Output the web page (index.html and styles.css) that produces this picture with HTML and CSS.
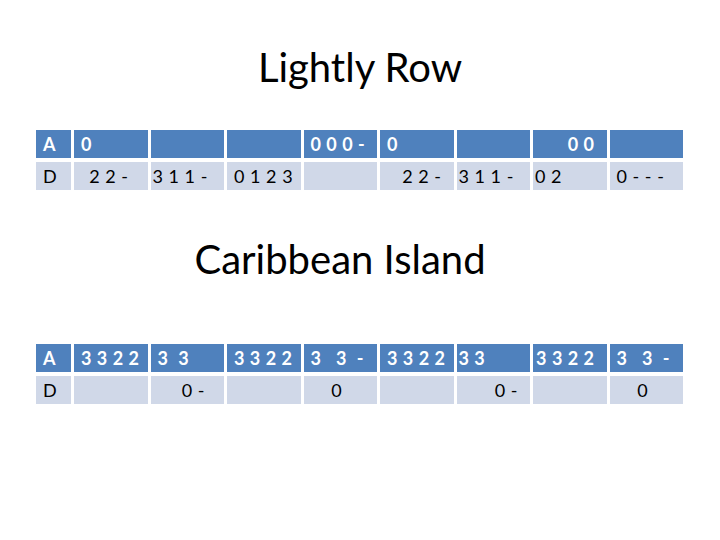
FILE: index.html
```html
<!DOCTYPE html>
<html>
<head>
  <title>Lightly Row</title>
  <link rel="stylesheet" href="styles.css">
</head>
<body>

<div class="slide">
  <h1 class="title">Lightly Row</h1>

  <div class="tab first">
    <div class="cell head">A</div>
    <div class="cell head">0</div>
    <div class="cell head"></div>
    <div class="cell head"></div>
    <div class="cell head">0 0 0 -</div>
    <div class="cell head">0</div>
    <div class="cell head"></div>
    <div class="cell head right">0 0</div>
    <div class="cell head"></div>

    <div class="cell body">D</div>
    <div class="cell body right wide">2 2 -</div>
    <div class="cell body tight">3 1 1 -</div>
    <div class="cell body">0 1 2 3</div>
    <div class="cell body"></div>
    <div class="cell body right">2 2 -</div>
    <div class="cell body tight">3 1 1 -</div>
    <div class="cell body tight">0 2</div>
    <div class="cell body">0 - - -</div>
  </div>

  <h2 class="title sub">Caribbean Island</h2>

  <div class="tab second">
    <div class="cell head">A</div>
    <div class="cell head">3 3 2 2</div>
    <div class="cell head">3  3</div>
    <div class="cell head">3 3 2 2</div>
    <div class="cell head">3   3  -</div>
    <div class="cell head">3 3 2 2</div>
    <div class="cell head tight">3 3</div>
    <div class="cell head right">3 3 2 2</div>
    <div class="cell head">3   3  -</div>

    <div class="cell body">D</div>
    <div class="cell body"></div>
    <div class="cell body right wide">0 -</div>
    <div class="cell body"></div>
    <div class="cell body center">0</div>
    <div class="cell body"></div>
    <div class="cell body right">0 -</div>
    <div class="cell body"></div>
    <div class="cell body center">0</div>
  </div>
</div>

</body>
</html>
```

FILE: styles.css
```css
body {
  margin: 0;
  background: #fff;
  font-family: Lato, "Open Sans", sans-serif;
}

.slide {
  width: 720px;
  height: 540px;
  overflow: hidden;
}

.title {
  margin: 0;
  font-size: 40px;
  font-weight: normal;
  color: #000;
  text-align: center;
  line-height: 1;
}

h1.title {
  padding-top: 47px;
}

.sub {
  padding-right: 40px;
  margin-top: 49px;
}

.tab {
  display: grid;
  grid-template-columns: 35px repeat(8, minmax(0, 1fr));
  grid-auto-rows: 28px;
  column-gap: 3px;
  row-gap: 4px;
  width: 647px;
  margin-left: 36px;
}

.first {
  margin-top: 43px;
}

.second {
  margin-top: 65px;
}

.cell {
  display: flex;
  align-items: center;
  padding: 0 7px;
  font-size: 18px;
  letter-spacing: 0.5px;
  white-space: pre;
}

.head {
  background: #4f81bd;
  color: #fff;
  font-weight: bold;
}

.body {
  background: #d0d8e8;
  color: #000;
}

.right {
  justify-content: flex-end;
  padding-right: 12px;
}

.right.wide {
  padding-right: 19px;
}

.tight {
  padding-left: 2px;
}

.center {
  justify-content: center;
  padding-right: 14px;
}
```
